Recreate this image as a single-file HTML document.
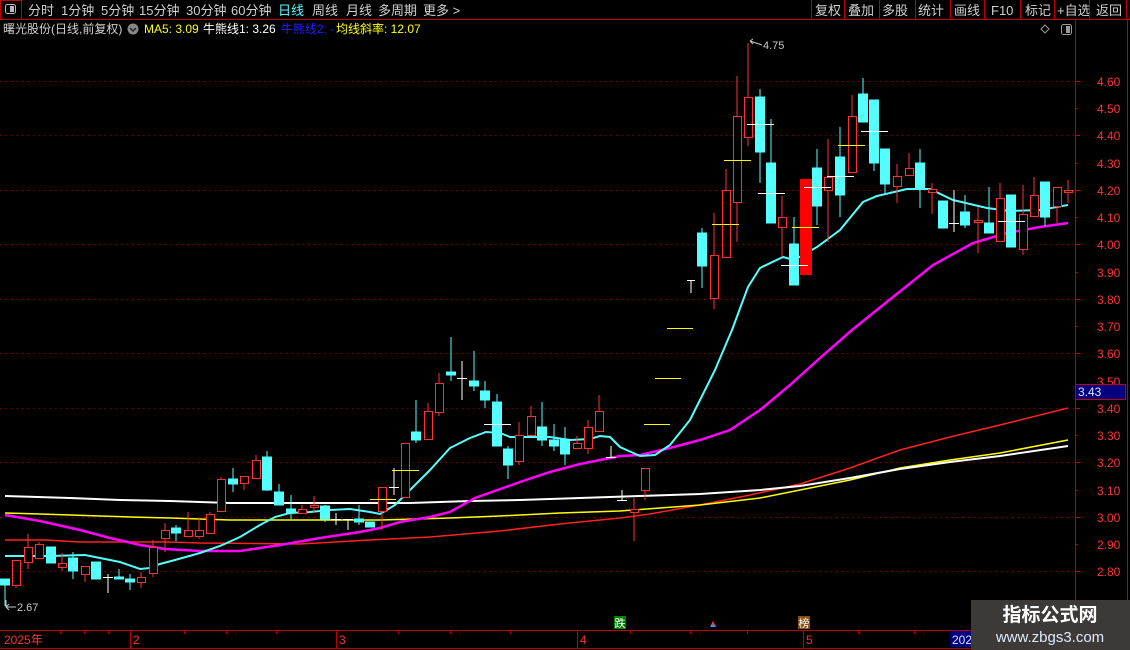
<!DOCTYPE html>
<html><head><meta charset="utf-8"><style>
html,body{margin:0;padding:0;background:#000;width:1130px;height:650px;overflow:hidden}
svg{display:block}
text{font-family:"Liberation Sans","Noto Sans CJK SC",sans-serif}
</style></head><body>
<svg width="1130" height="650" viewBox="0 0 1130 650" xmlns="http://www.w3.org/2000/svg">
<rect width="1130" height="650" fill="#000"/>
<!-- toolbar -->
<line x1="0" y1="19.5" x2="1130" y2="19.5" stroke="#c00000"/>
<rect x="0.5" y="0.5" width="21" height="19" fill="none" stroke="#c00000"/>
<rect x="5.5" y="4.5" width="10" height="9" rx="2" fill="none" stroke="#bbb"/>
<rect x="10" y="6" width="4" height="6" fill="#bbb"/>
<g font-size="13" fill="#d0d0d0">
<text x="28" y="15">分时</text><text x="61" y="15">1分钟</text><text x="101" y="15">5分钟</text><text x="139" y="15">15分钟</text><text x="186" y="15">30分钟</text><text x="231" y="15">60分钟</text>
<text x="278" y="15" fill="#54ffff">日线</text><text x="312" y="15">周线</text><text x="346" y="15">月线</text><text x="378" y="15">多周期</text><text x="423" y="15">更多 &gt;</text>
<text x="815" y="15">复权</text><text x="848" y="15">叠加</text><text x="882" y="15">多股</text><text x="918" y="15">统计</text><text x="954" y="15">画线</text><text x="991" y="15">F10</text><text x="1025" y="15">标记</text><text x="1057" y="15">+自选</text><text x="1096" y="15">返回</text>
</g>
<g stroke="#c00000"><line x1="811.5" y1="0" x2="811.5" y2="19"/><line x1="844.5" y1="0" x2="844.5" y2="19"/><line x1="879.5" y1="0" x2="879.5" y2="19"/><line x1="915.5" y1="0" x2="915.5" y2="19"/><line x1="950.5" y1="0" x2="950.5" y2="19"/><line x1="984.5" y1="0" x2="984.5" y2="19"/><line x1="1020.5" y1="0" x2="1020.5" y2="19"/><line x1="1054.5" y1="0" x2="1054.5" y2="19"/><line x1="1089.5" y1="0" x2="1089.5" y2="19"/><line x1="1126.5" y1="0" x2="1126.5" y2="19"/></g>
<!-- legend -->
<g font-size="12">
<text x="3" y="33" fill="#d0d0d0">曙光股份(日线,前复权)</text>
<circle cx="133" cy="29" r="5.5" fill="#888"/><path d="M130 28 L133 31 L136 28" stroke="#222" stroke-width="1.4" fill="none"/>
<text x="144" y="33" fill="#ffff00">MA5: 3.09</text>
<text x="203" y="33" fill="#fff">牛熊线1: 3.26</text>
<text x="281" y="33" fill="#2020ff">牛熊线2: -</text>
<text x="336" y="33" fill="#ffff00">均线斜率: 12.07</text>
</g>
<path d="M1045 25 L1049 29 L1045 33 L1041 29 Z" fill="none" stroke="#999"/>
<rect x="1061.5" y="24.5" width="10" height="10" rx="2" fill="none" stroke="#999"/><rect x="1066" y="26" width="4" height="7" fill="#999"/>
<!-- grid -->
<g stroke="#8a0000" stroke-dasharray="1.5 4">
<line x1="0" y1="81.5" x2="1075" y2="81.5"/><line x1="0" y1="135.5" x2="1075" y2="135.5"/><line x1="0" y1="190.5" x2="1075" y2="190.5"/><line x1="0" y1="244.5" x2="1075" y2="244.5"/><line x1="0" y1="299.5" x2="1075" y2="299.5"/><line x1="0" y1="353.5" x2="1075" y2="353.5"/><line x1="0" y1="408.5" x2="1075" y2="408.5"/><line x1="0" y1="462.5" x2="1075" y2="462.5"/><line x1="0" y1="517.5" x2="1075" y2="517.5"/><line x1="0" y1="571.5" x2="1075" y2="571.5"/>
</g>
<!-- axis -->
<line x1="1075.5" y1="20" x2="1075.5" y2="630" stroke="#c00000"/>
<line x1="1127.5" y1="20" x2="1127.5" y2="600" stroke="#c00000"/>
<g stroke="#c00000">
<line x1="1075" y1="81.5" x2="1080" y2="81.5"/><line x1="1075" y1="108.5" x2="1078" y2="108.5"/><line x1="1075" y1="135.5" x2="1080" y2="135.5"/><line x1="1075" y1="163.5" x2="1078" y2="163.5"/><line x1="1075" y1="190.5" x2="1080" y2="190.5"/><line x1="1075" y1="217.5" x2="1078" y2="217.5"/><line x1="1075" y1="244.5" x2="1080" y2="244.5"/><line x1="1075" y1="272.5" x2="1078" y2="272.5"/><line x1="1075" y1="299.5" x2="1080" y2="299.5"/><line x1="1075" y1="326.5" x2="1078" y2="326.5"/><line x1="1075" y1="353.5" x2="1080" y2="353.5"/><line x1="1075" y1="408.5" x2="1080" y2="408.5"/><line x1="1075" y1="435.5" x2="1078" y2="435.5"/><line x1="1075" y1="462.5" x2="1080" y2="462.5"/><line x1="1075" y1="490.5" x2="1078" y2="490.5"/><line x1="1075" y1="517.5" x2="1080" y2="517.5"/><line x1="1075" y1="544.5" x2="1078" y2="544.5"/><line x1="1075" y1="571.5" x2="1080" y2="571.5"/>
</g>
<g font-size="12" fill="#ff3232" font-family="Liberation Mono,monospace">
<text x="1097" y="86">4.60</text><text x="1097" y="113">4.50</text><text x="1097" y="140">4.40</text><text x="1097" y="168">4.30</text><text x="1097" y="195">4.20</text><text x="1097" y="222">4.10</text><text x="1097" y="249">4.00</text><text x="1097" y="277">3.90</text><text x="1097" y="304">3.80</text><text x="1097" y="331">3.70</text><text x="1097" y="358">3.60</text><text x="1097" y="386">3.50</text><text x="1097" y="413">3.40</text><text x="1097" y="440">3.30</text><text x="1097" y="467">3.20</text><text x="1097" y="495">3.10</text><text x="1097" y="522">3.00</text><text x="1097" y="549">2.90</text><text x="1097" y="576">2.80</text>
</g>
<rect x="1075.5" y="384.5" width="50" height="15" fill="#000080" stroke="#c00000"/>
<text x="1078" y="396" font-size="12" fill="#e0e0ff">3.43</text>
<!-- long lines -->
<polyline fill="none" stroke="#ff2020" stroke-width="1.5" points="5,540 45,540 80,542 170,542 200,543 300,544 370,540 430,537 500,531 560,524 620,518 650,514 700,505 750,495 800,484 850,468 900,450 950,437 1000,425 1068,408"/>
<polyline fill="none" stroke="#ffff00" stroke-width="1.5" points="5,513 40,514 100,516 130,517 170,518 200,519 230,520 380,520 450,518 500,516 560,513 620,511 660,508 700,505 760,498 800,490 850,480 900,468 950,460 1000,453 1068,440"/>
<polyline fill="none" stroke="#ffffff" stroke-width="2" points="5,496 70,498 120,500 170,501 230,503 410,503 470,501 520,500 580,498 640,496 700,494 760,490 800,486 850,478 900,469 950,462 1000,456 1068,446"/>
<polyline fill="none" stroke="#ff00ff" stroke-width="2.5" points="5,515 40,521 80,530 110,538 140,545 165,549 200,551 240,551 280,545 320,538 360,532 380,528 400,522 430,517 450,512 475,498 520,482 550,472 580,464 600,460 620,456 640,455 670,448 700,440 730,430 760,410 790,385 820,358 852,330 893,297 933,265 973,243 1007,233 1040,227 1068,223"/>
<polyline fill="none" stroke="#54ffff" stroke-width="2" points="5,556 50,556 85,555 95,557 120,562 140,569 150,568 160,564 175,560 200,553 220,546 240,537 260,525 275,517 290,513 310,512 330,510 350,509 370,512 380,514 395,505 410,490 430,470 450,448 470,438 486,432 500,433 510,437 550,437 570,440 590,439 600,436 610,437 620,447 640,456 655,455 670,445 690,420 700,400 715,370 732,330 748,287 760,268 783,257 794,260 817,247 840,230 863,202 877,196 907,189 930,189 953,200 987,208 1010,211 1040,210 1068,205"/>
<!-- candles -->
<g stroke-width="1">
<!-- cyan -->
<g stroke="#54ffff" fill="#54ffff">
<line x1="5" y1="585" x2="5" y2="606"/><rect x="0.5" y="579" width="9" height="6"/>
<rect x="46.5" y="547" width="9" height="16"/>
<line x1="73" y1="552" x2="73" y2="579"/><rect x="68.5" y="558" width="9" height="13"/>
<rect x="91.5" y="562" width="9" height="17"/>
<line x1="119" y1="569" x2="119" y2="579"/><rect x="114.5" y="577" width="9" height="2"/>
<line x1="130" y1="574" x2="130" y2="590"/><rect x="125.5" y="579" width="9" height="3"/>
<line x1="176" y1="525" x2="176" y2="541"/><rect x="171.5" y="528" width="9" height="5"/>
<line x1="233" y1="468" x2="233" y2="492"/><rect x="228.5" y="479" width="9" height="5"/>
<line x1="267" y1="451" x2="267" y2="491"/><rect x="262.5" y="457" width="9" height="33"/>
<line x1="279" y1="484" x2="279" y2="505"/><rect x="274.5" y="492" width="9" height="13"/>
<line x1="291" y1="495" x2="291" y2="519"/><rect x="286.5" y="509" width="9" height="4"/>
<line x1="325" y1="505" x2="325" y2="522"/><rect x="320.5" y="506" width="9" height="13"/>
<line x1="359" y1="505" x2="359" y2="525"/><rect x="354.5" y="519" width="9" height="3"/>
<rect x="365.5" y="522" width="9" height="5"/>
<line x1="416" y1="400" x2="416" y2="443"/><rect x="411.5" y="432" width="9" height="8"/>
<line x1="451" y1="337" x2="451" y2="381"/><rect x="446.5" y="372" width="9" height="3"/>
<line x1="474" y1="351" x2="474" y2="391"/><rect x="469.5" y="381" width="9" height="5"/>
<line x1="485" y1="381" x2="485" y2="408"/><rect x="480.5" y="391" width="9" height="9"/>
<line x1="497" y1="394" x2="497" y2="446"/><rect x="492.5" y="402" width="9" height="44"/>
<line x1="508" y1="446" x2="508" y2="479"/><rect x="503.5" y="449" width="9" height="16"/>
<line x1="542" y1="402" x2="542" y2="446"/><rect x="537.5" y="427" width="9" height="13"/>
<line x1="554" y1="424" x2="554" y2="451"/><rect x="549.5" y="440" width="9" height="6"/>
<line x1="565" y1="427" x2="565" y2="465"/><rect x="560.5" y="440" width="9" height="14"/>
<line x1="702" y1="228" x2="702" y2="288"/><rect x="697.5" y="233" width="9" height="33"/>
<line x1="760" y1="89" x2="760" y2="183"/><rect x="755.5" y="97" width="9" height="55"/>
<line x1="771" y1="119" x2="771" y2="223"/><rect x="766.5" y="163" width="9" height="60"/>
<line x1="794" y1="217" x2="794" y2="285"/><rect x="789.5" y="244" width="9" height="41"/>
<line x1="817" y1="149" x2="817" y2="225"/><rect x="812.5" y="168" width="9" height="38"/>
<line x1="840" y1="127" x2="840" y2="217"/><rect x="835.5" y="157" width="9" height="38"/>
<line x1="863" y1="78" x2="863" y2="122"/><rect x="858.5" y="94" width="9" height="28"/>
<line x1="874" y1="100" x2="874" y2="171"/><rect x="869.5" y="100" width="9" height="63"/>
<line x1="885" y1="149" x2="885" y2="195"/><rect x="880.5" y="149" width="9" height="35"/>
<line x1="920" y1="149" x2="920" y2="208"/><rect x="915.5" y="163" width="9" height="26"/>
<rect x="938.5" y="201" width="9" height="27"/>
<line x1="965" y1="195" x2="965" y2="228"/><rect x="960.5" y="212" width="9" height="13"/>
<line x1="989" y1="187" x2="989" y2="233"/><rect x="984.5" y="223" width="9" height="10"/>
<rect x="1006.5" y="195" width="9" height="52"/>
<line x1="1045" y1="182" x2="1045" y2="226"/><rect x="1040.5" y="182" width="9" height="35"/>
</g>
<!-- red hollow -->
<g stroke="#ff3232" fill="#000">
<line x1="16" y1="560" x2="16" y2="588"/><rect x="12.5" y="560.5" width="8" height="25"/>
<line x1="28" y1="534" x2="28" y2="569"/><rect x="24.5" y="547.5" width="8" height="15"/>
<line x1="39" y1="542" x2="39" y2="559"/><rect x="35.5" y="544.5" width="8" height="14"/>
<line x1="62" y1="553" x2="62" y2="571"/><rect x="58.5" y="563.5" width="8" height="4"/>
<line x1="85" y1="566" x2="85" y2="582"/><rect x="81.5" y="566.5" width="8" height="8"/>
<line x1="141" y1="572" x2="141" y2="588"/><rect x="137.5" y="577.5" width="8" height="5"/>
<line x1="153" y1="540" x2="153" y2="577"/><rect x="149.5" y="547.5" width="8" height="26"/>
<line x1="165" y1="523" x2="165" y2="552"/><rect x="161.5" y="530.5" width="8" height="8"/>
<line x1="188" y1="512" x2="188" y2="537"/><rect x="184.5" y="530.5" width="8" height="6"/>
<line x1="199" y1="518" x2="199" y2="539"/><rect x="195.5" y="530.5" width="8" height="6"/>
<line x1="210" y1="512" x2="210" y2="534"/><rect x="206.5" y="514.5" width="8" height="19"/>
<line x1="221" y1="477" x2="221" y2="512"/><rect x="217.5" y="479.5" width="8" height="32"/>
<line x1="244" y1="476" x2="244" y2="490"/><rect x="240.5" y="476.5" width="8" height="7"/>
<line x1="256" y1="455" x2="256" y2="479"/><rect x="252.5" y="460.5" width="8" height="18"/>
<line x1="302" y1="505" x2="302" y2="514"/><rect x="298.5" y="509.5" width="8" height="4"/>
<line x1="314" y1="496" x2="314" y2="513"/><rect x="310.5" y="505.5" width="8" height="2"/>
<line x1="382" y1="487" x2="382" y2="530"/><rect x="378.5" y="487.5" width="8" height="24"/>
<rect x="401.5" y="443.5" width="8" height="54"/>
<line x1="428" y1="403" x2="428" y2="440"/><rect x="424.5" y="411.5" width="8" height="28"/>
<line x1="439" y1="373" x2="439" y2="416"/><rect x="435.5" y="383.5" width="8" height="29"/>
<line x1="519" y1="422" x2="519" y2="465"/><rect x="515.5" y="435.5" width="8" height="26"/>
<line x1="531" y1="406" x2="531" y2="436"/><rect x="527.5" y="416.5" width="8" height="19"/>
<line x1="577" y1="436" x2="577" y2="449"/><rect x="573.5" y="443.5" width="8" height="5"/>
<line x1="588" y1="420" x2="588" y2="454"/><rect x="584.5" y="427.5" width="8" height="21"/>
<line x1="599" y1="395" x2="599" y2="432"/><rect x="595.5" y="411.5" width="8" height="20"/>
<line x1="634" y1="498" x2="634" y2="541"/><rect x="630.5" y="509.5" width="8" height="3"/>
<line x1="645" y1="468" x2="645" y2="500"/><rect x="641.5" y="468.5" width="8" height="22"/>
<line x1="714" y1="213" x2="714" y2="309"/><rect x="710.5" y="255.5" width="8" height="43"/>
<line x1="726" y1="169" x2="726" y2="258"/><rect x="722.5" y="190.5" width="8" height="67"/>
<line x1="737" y1="76" x2="737" y2="242"/><rect x="733.5" y="116.5" width="8" height="86"/>
<line x1="748" y1="43" x2="748" y2="146"/><rect x="744.5" y="97.5" width="8" height="40"/>
<line x1="782" y1="196" x2="782" y2="257"/><rect x="778.5" y="217.5" width="8" height="10"/>
<line x1="828" y1="139" x2="828" y2="242"/><rect x="824.5" y="177.5" width="8" height="13"/>
<line x1="852" y1="95" x2="852" y2="173"/><rect x="848.5" y="116.5" width="8" height="56"/>
<line x1="897" y1="164" x2="897" y2="203"/><rect x="893.5" y="176.5" width="8" height="10"/>
<line x1="909" y1="153" x2="909" y2="176"/><rect x="905.5" y="168.5" width="8" height="7"/>
<line x1="932" y1="183" x2="932" y2="214"/><rect x="928.5" y="189.5" width="8" height="3"/>
<line x1="978" y1="207" x2="978" y2="253"/><rect x="974.5" y="220.5" width="8" height="2"/>
<line x1="1000" y1="183" x2="1000" y2="242"/><rect x="996.5" y="198.5" width="8" height="43"/>
<line x1="1023" y1="185" x2="1023" y2="255"/><rect x="1019.5" y="214.5" width="8" height="35"/>
<line x1="1034" y1="177" x2="1034" y2="217"/><rect x="1030.5" y="195.5" width="8" height="21"/>
<line x1="1057" y1="187" x2="1057" y2="223"/><rect x="1053.5" y="187.5" width="8" height="19"/>
<line x1="1068" y1="180" x2="1068" y2="203"/><rect x="1064.5" y="190.5" width="8" height="2"/>
</g>
<rect x="800" y="179" width="12" height="96" fill="#ff0000"/>
<!-- white doji -->
<g stroke="#fff">
<line x1="108" y1="574" x2="108" y2="593"/><line x1="103" y1="577.5" x2="113" y2="577.5"/>
<line x1="336" y1="513" x2="336" y2="525"/><line x1="331" y1="519.5" x2="341" y2="519.5"/>
<line x1="348" y1="519" x2="348" y2="530"/><line x1="343" y1="519.5" x2="353" y2="519.5"/>
<line x1="394" y1="468" x2="394" y2="495"/><line x1="389" y1="487.5" x2="399" y2="487.5"/>
<line x1="462" y1="361" x2="462" y2="400"/><line x1="457" y1="378.5" x2="467" y2="378.5"/>
<line x1="611" y1="446" x2="611" y2="457"/><line x1="606" y1="457.5" x2="616" y2="457.5"/>
<line x1="622" y1="490" x2="622" y2="500"/><line x1="617" y1="500.5" x2="627" y2="500.5"/>
<line x1="691" y1="280" x2="691" y2="293"/><line x1="687" y1="280.5" x2="695" y2="280.5"/>
<line x1="954" y1="190" x2="954" y2="232"/><line x1="949" y1="223.5" x2="959" y2="223.5"/>
<!-- white dashes -->
<line x1="484" y1="424.5" x2="511" y2="424.5"/>
<line x1="747" y1="124.5" x2="774" y2="124.5"/>
<line x1="758" y1="193.5" x2="785" y2="193.5"/>
<line x1="781" y1="265.5" x2="808" y2="265.5"/>
<line x1="804" y1="187.5" x2="831" y2="187.5"/>
<line x1="827" y1="176.5" x2="854" y2="176.5"/>
<line x1="861" y1="131.5" x2="888" y2="131.5"/>
<line x1="998" y1="221.5" x2="1025" y2="221.5"/>
</g>
<g stroke="#ffff00">
<line x1="370" y1="499.5" x2="396" y2="499.5"/>
<line x1="392" y1="470.5" x2="419" y2="470.5"/>
<line x1="644" y1="424.5" x2="670" y2="424.5"/>
<line x1="655" y1="378.5" x2="681" y2="378.5"/>
<line x1="667" y1="328.5" x2="693" y2="328.5"/>
<line x1="712" y1="224.5" x2="739" y2="224.5"/>
<line x1="724" y1="160.5" x2="751" y2="160.5"/>
<line x1="792" y1="227.5" x2="819" y2="227.5"/>
<line x1="838" y1="145.5" x2="865" y2="145.5"/>
</g>
</g>
<!-- labels -->
<g font-size="11" fill="#c8c8c8">
<path d="M750 41 L762 45 M750 41 L753 39 M750 41 L753 44" stroke="#c8c8c8" fill="none"/>
<text x="763" y="49">4.75</text>
<path d="M6 600 L6 607 L16 607 M6 607 L9 604 M6 607 L9 610" stroke="#c8c8c8" fill="none"/>
<text x="17" y="611">2.67</text>
</g>
<!-- markers -->
<rect x="614" y="616" width="12" height="13" fill="#008000"/><text x="614.5" y="627" font-size="11" fill="#fff">跌</text>
<path d="M713 621 L716 627 L710 627 Z" fill="#3399ff"/><path d="M713 621 L715 625 L711 625 Z" fill="#ff3232"/>
<rect x="798" y="616" width="12" height="13" fill="#8a4b10"/><text x="798.5" y="627" font-size="11" fill="#fff">榜</text>
<!-- bottom axis -->
<line x1="0" y1="630.5" x2="1130" y2="630.5" stroke="#c00000"/>
<line x1="0" y1="648.5" x2="1130" y2="648.5" stroke="#c00000"/>
<g stroke="#c00000">
<line x1="60.5" y1="630" x2="60.5" y2="634"/><line x1="84.5" y1="630" x2="84.5" y2="634"/><line x1="108.5" y1="630" x2="108.5" y2="634"/><line x1="130.5" y1="630" x2="130.5" y2="648"/><line x1="184.5" y1="630" x2="184.5" y2="634"/><line x1="226.5" y1="630" x2="226.5" y2="634"/><line x1="276.5" y1="630" x2="276.5" y2="634"/><line x1="336.5" y1="630" x2="336.5" y2="648"/><line x1="398.5" y1="630" x2="398.5" y2="634"/><line x1="450.5" y1="630" x2="450.5" y2="634"/><line x1="510.5" y1="630" x2="510.5" y2="634"/><line x1="577.5" y1="630" x2="577.5" y2="648"/><line x1="630.5" y1="630" x2="630.5" y2="634"/><line x1="690.5" y1="630" x2="690.5" y2="634"/><line x1="747.5" y1="630" x2="747.5" y2="634"/><line x1="803.5" y1="630" x2="803.5" y2="648"/><line x1="858.5" y1="630" x2="858.5" y2="634"/><line x1="914.5" y1="630" x2="914.5" y2="634"/>
</g>
<g font-size="12" fill="#ff3232">
<text x="4" y="644">2025年</text><text x="133" y="644">2</text><text x="339" y="644">3</text><text x="580" y="644">4</text><text x="806" y="644">5</text>
</g>
<rect x="950" y="631" width="22" height="16" fill="#000080"/>
<text x="952" y="644" font-size="12" fill="#e0e0ff">202</text>
<!-- watermark -->
<rect x="971" y="600" width="159" height="50" fill="#3d3937"/>
<text x="1050" y="621" font-size="19" font-weight="bold" fill="#fff" text-anchor="middle">指标公式网</text>
<text x="1050" y="642" font-size="15" fill="#dfeaff" text-anchor="middle">www.zbgs3.com</text>
</svg>
</body></html>
